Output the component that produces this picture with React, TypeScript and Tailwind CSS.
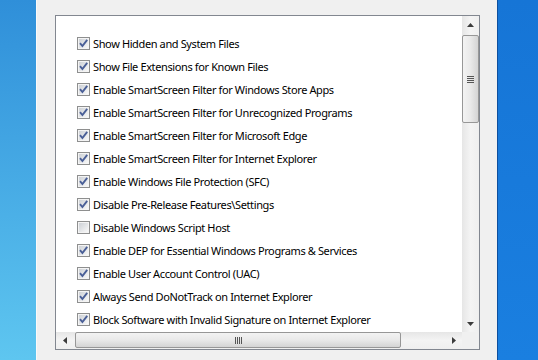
import React from "react";

const items: [string, boolean][] = [
  ["Show Hidden and System Files", true],
  ["Show File Extensions for Known Files", true],
  ["Enable SmartScreen Filter for Windows Store Apps", true],
  ["Enable SmartScreen Filter for Unrecognized Programs", true],
  ["Enable SmartScreen Filter for Microsoft Edge", true],
  ["Enable SmartScreen Filter for Internet Explorer", true],
  ["Enable Windows File Protection (SFC)", true],
  ["Disable Pre-Release Features\\Settings", true],
  ["Disable Windows Script Host", false],
  ["Enable DEP for Essential Windows Programs & Services", true],
  ["Enable User Account Control (UAC)", true],
  ["Always Send DoNotTrack on Internet Explorer", true],
  ["Block Software with Invalid Signature on Internet Explorer", true],
];

function CheckBox({ checked }: { checked: boolean }) {
  return (
    <svg width="13" height="13" viewBox="0 0 13 13" className="shrink-0">
      <defs>
        <linearGradient id="cbg" x1="0" y1="0" x2="1" y2="1">
          <stop offset="0" stopColor="#cdd1d6" />
          <stop offset="1" stopColor="#f8f8f8" />
        </linearGradient>
      </defs>
      <rect x="0.5" y="0.5" width="12" height="12" fill="#f4f4f4" stroke="#8e8f8f" />
      <rect x="2" y="2" width="9" height="9" fill="url(#cbg)" />
      {checked && (
        <path d="M3 6.2 L5.4 9 L10.2 2.8" fill="none" stroke="#4a5f97" strokeWidth="1.9" />
      )}
    </svg>
  );
}

function Tri({ dir }: { dir: "up" | "down" | "left" | "right" }) {
  const pts =
    dir === "up"
      ? "0,4 7,4 3.5,0"
      : dir === "down"
      ? "0,0 7,0 3.5,4"
      : dir === "left"
      ? "4,0 4,7 0,3.5"
      : "0,0 0,7 4,3.5";
  const w = dir === "up" || dir === "down" ? 7 : 4;
  const h = dir === "up" || dir === "down" ? 4 : 7;
  return (
    <svg width={w} height={h} viewBox={`0 0 ${w} ${h}`}>
      <polygon points={pts} fill="#3c3c3c" />
    </svg>
  );
}

export default function App() {
  return (
    <div
      className="flex h-[360px] w-[538px] overflow-hidden"
      style={{ fontFamily: '"Noto Sans", "Open Sans", sans-serif' }}
    >
      <div className="w-[36px] shrink-0 bg-gradient-to-b from-[#2f8fd9] to-[#5ec6f0]" />
      <div className="w-[461px] shrink-0 border-l border-[#fafafa] bg-[#f0f0f0] pl-[18px] pt-[15px]">
        <div className="flex h-[335px] w-[425px] flex-col border border-[#828790] bg-white">
          <div className="flex h-[316px]">
            <div className="flex w-[406px] flex-col pl-[21px] pt-[16px]">
              {items.map(([label, checked]) => (
                <div key={label} className="flex h-[23px] items-center">
                  <CheckBox checked={checked} />
                  <span className="ml-[3px] whitespace-nowrap text-[11px] leading-none tracking-[-0.38px] text-black">
                    {label}
                  </span>
                </div>
              ))}
            </div>
            <div className="flex w-[17px] flex-col bg-gradient-to-r from-[#e6e6e6] via-[#f4f4f4] to-[#efefef]">
              <div className="flex h-[17px] items-center justify-center">
                <Tri dir="up" />
              </div>
              <div className="mx-[0px] mt-[2px] flex h-[88px] items-center justify-center rounded-[2px] border border-[#979797] bg-gradient-to-r from-[#f3f3f3] via-[#e9e9e9] to-[#d4d4d4]">
                <div className="flex flex-col gap-[1px]">
                  <div className="h-px w-[7px] bg-[#555]" />
                  <div className="h-px w-[7px] bg-[#555]" />
                  <div className="h-px w-[7px] bg-[#555]" />
                  <div className="h-px w-[7px] bg-[#555]" />
                </div>
              </div>
              <div className="flex-1" />
              <div className="flex h-[17px] items-center justify-center">
                <Tri dir="down" />
              </div>
            </div>
          </div>
          <div className="flex h-[17px]">
            <div className="flex w-[406px] bg-gradient-to-b from-[#e6e6e6] via-[#f4f4f4] to-[#efefef]">
              <div className="flex w-[17px] items-center justify-center">
                <Tri dir="left" />
              </div>
              <div className="ml-[2px] flex h-[16px] w-[326px] items-center justify-center rounded-[2px] border border-[#979797] bg-gradient-to-b from-[#f3f3f3] via-[#e9e9e9] to-[#d4d4d4]">
                <div className="flex gap-[1px]">
                  <div className="h-[7px] w-px bg-[#555]" />
                  <div className="h-[7px] w-px bg-[#555]" />
                  <div className="h-[7px] w-px bg-[#555]" />
                  <div className="h-[7px] w-px bg-[#555]" />
                </div>
              </div>
              <div className="flex-1" />
              <div className="flex w-[17px] items-center justify-center">
                <Tri dir="right" />
              </div>
            </div>
            <div className="w-[17px] bg-[#f0f0f0]" />
          </div>
        </div>
      </div>
      <div className="flex-1 border-l border-[#0d4f9e] bg-gradient-to-b from-[#1675d6] to-[#1a7fe0]" />
    </div>
  );
}
